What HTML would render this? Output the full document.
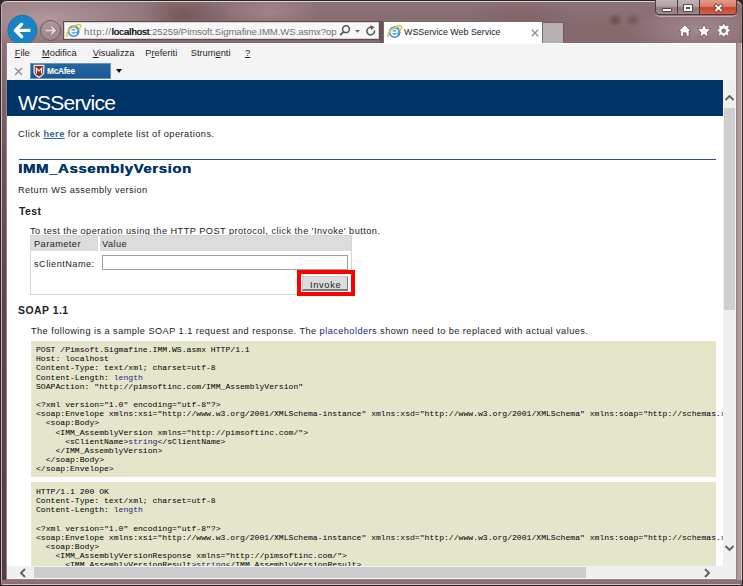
<!DOCTYPE html>
<html><head><meta charset="utf-8">
<style>
*{box-sizing:border-box;margin:0;padding:0}
html,body{width:743px;height:586px;overflow:hidden;background:#2e2226}
body{position:relative;font-family:"Liberation Sans",sans-serif}
.a{position:absolute}
#frame{left:0;top:0;width:743px;height:586px;border-radius:7px 7px 3px 3px;
 background:radial-gradient(ellipse 130px 34px at 45px 20px,rgba(205,182,184,0.6),rgba(205,182,184,0)),radial-gradient(ellipse 50px 20px at 270px 12px,rgba(200,168,170,0.35),rgba(200,168,170,0)),radial-gradient(ellipse 45px 22px at 185px 14px,rgba(80,50,50,0.35),rgba(80,50,50,0)),radial-gradient(ellipse 8px 7px at 615px 20px,rgba(60,40,42,0.45),rgba(60,40,42,0)),radial-gradient(ellipse 8px 7px at 633px 20px,rgba(60,40,42,0.35),rgba(60,40,42,0)),radial-gradient(ellipse 75px 24px at 700px 30px,rgba(205,185,187,0.4),rgba(205,185,187,0)),radial-gradient(ellipse 60px 20px at 520px 14px,rgba(90,60,62,0.2),rgba(90,60,62,0)),linear-gradient(180deg,#8f7477 0%,#84696d 5%,#82686b 100%)}
#menu{left:7px;top:43px;width:729px;height:37px;background:#f4f4f4;border-top:1px solid #fdfdfd}
#view{left:7px;top:80px;width:729px;height:499px;background:#fff;overflow:hidden}
.mi{top:47px;font-size:9.3px;line-height:12px;color:#1e1e1e}
.mi u{text-decoration:underline;text-underline-offset:0.5px}
#hdr{left:0;top:0;width:716px;height:36px;background:#003366}
#hdr span{position:absolute;color:#fff;line-height:24px}
.t{position:absolute;font-size:9.2px;line-height:12px;color:#222;white-space:nowrap}
.b{font-weight:bold}
pre{position:absolute;left:24px;width:685px;background:#e5e5cc;font-family:"Liberation Mono",monospace;font-size:8.1px;line-height:9.17px;color:#000;padding:4px 0 0 5px;white-space:pre;overflow:visible}
.v{color:#24247a}
#vs{left:723px;top:80px;width:13px;height:486px;background:#f0f0f0}
#hs{left:7px;top:566px;width:716px;height:12px;background:#f0f0f0}
</style></head><body>
<div id="frame" class="a"></div>
<div class="a" style="left:1px;top:43px;width:5px;height:542px;background:linear-gradient(90deg,rgba(200,185,186,0.8) 0,rgba(200,185,186,0.8) 1px,transparent 1px),linear-gradient(180deg,#8c7476 0,#6e5557 110px,#5c4448 250px,#553d41 100%)"></div>
<div class="a" style="left:737px;top:43px;width:5px;height:542px;background:linear-gradient(90deg,#a68c8e 0,#b8a0a2 2px,#a88e90 4px,#d8cacb 4px)"></div>
<div class="a" style="left:1px;top:580px;width:741px;height:5px;background:linear-gradient(180deg,#927476 0,#8c6c6e 4px,#d0c2c2 4px)"></div>
<div class="a" style="left:0;top:0;width:743px;height:586px;border-radius:7px 7px 3px 3px;border:1px solid #2a2426;box-shadow:inset 0 1px 0 0 rgba(235,225,225,0.85),inset 1px 0 0 0 rgba(220,205,205,0.5)"></div>
<div class="a" style="left:6px;top:43px;width:731px;height:537px;border:1px solid #8c8486;border-radius:1px"></div>

<!-- window buttons -->
<div class="a" style="left:655px;top:0;width:82px;height:16px;border-radius:0 0 5px 5px;box-shadow:0 1px 0 rgba(235,225,225,0.5)"></div>
<div class="a" style="left:655px;top:0;width:45px;height:15px;border:1px solid #4e3e42;border-top:none;border-radius:0 0 0 4px;background:linear-gradient(#c2b4b6 0%,#b0a1a3 45%,#8e7c7f 55%,#9a888b 100%)"></div>
<div class="a" style="left:677px;top:0;width:1px;height:15px;background:#4e3e42"></div>
<div class="a" style="left:699px;top:0;width:38px;height:15px;border:1px solid #5a3430;border-top:none;border-radius:0 0 4px 0;background:linear-gradient(#e59a8c 0%,#dc7d6c 45%,#c8432f 55%,#d2604e 100%)"></div>
<div class="a" style="left:662px;top:8px;width:10px;height:4px;background:#fff;border:1px solid #4a4a4a;border-radius:1px"></div>
<div class="a" style="left:684px;top:5px;width:8px;height:6px;border:2px solid #fff;box-shadow:0 0 0 1px #505050,inset 0 0 0 1px #505050;background:#a09092"></div>
<svg class="a" style="left:713px;top:3px" width="11" height="10"><path d="M3 2.6 L8 7.4 M8 2.6 L3 7.4" stroke="#6a3a34" stroke-width="3.4" stroke-linecap="square"/><path d="M3 2.6 L8 7.4 M8 2.6 L3 7.4" stroke="#fff" stroke-width="1.9" stroke-linecap="square"/></svg>

<!-- back / forward -->
<svg class="a" style="left:0;top:0" width="45" height="45"><circle cx="22.4" cy="29.9" r="14.8" fill="#1884c6" stroke="rgba(50,40,60,0.35)" stroke-width="0.6"/><path d="M16 30.4 H30.4" stroke="#fff" stroke-width="3.2"/><path d="M21.6 24.2 L15.4 30.4 L21.6 36.6" stroke="#fff" stroke-width="3.4" fill="none" stroke-linecap="round" stroke-linejoin="round"/></svg>
<div class="a" style="left:40px;top:20px;width:21px;height:21px;border-radius:50%;border:1px solid #6e5a5d;background:rgba(175,155,158,0.35)"></div>
<svg class="a" style="left:40px;top:20px" width="21" height="21"><path d="M5.5 10.5 H15 M11.2 6.6 L15 10.5 L11.2 14.4" stroke="rgba(90,66,70,0.45)" stroke-width="3.2" fill="none"/><path d="M5.5 10.5 H15 M11.2 6.6 L15 10.5 L11.2 14.4" stroke="#e6dcdc" stroke-width="1.8" fill="none"/></svg>

<!-- address bar -->
<div class="a" style="left:63px;top:21px;width:317px;height:19px;background:#f7f7f7;border:1px solid #5e4c50;box-shadow:inset 0 0 0 1px #d8d2d3"></div>
<svg class="a" style="left:65px;top:23px" width="17" height="15" viewBox="0 0 17 15"><circle cx="8.6" cy="8.2" r="5.9" fill="#4596d6"/><path d="M5.3 8.4 H11.6 M11.6 8.4 C11.6 6.2 10.4 5.2 8.7 5.2 C6.8 5.2 5.3 6.6 5.3 8.6 C5.3 10.6 6.8 11.6 8.7 11.6 C9.9 11.6 10.8 11.1 11.4 10.3" stroke="#f4f8fc" stroke-width="1.6" fill="none"/><path d="M2.6 13.6 C0.2 11.8 3 6.5 8.5 3.6 C12.5 1.5 15.8 1.2 16 2.6 C16.2 3.8 14.6 5.6 13.4 6.6" stroke="#e8c63c" stroke-width="1.5" fill="none"/></svg>
<div class="a" style="left:84px;top:24.5px;font-size:9.6px;color:#707070;white-space:nowrap;line-height:13px"><span style="letter-spacing:0.5px">http://</span><span style="color:#151515;text-shadow:0.4px 0 0 #151515">localhost</span><span style="letter-spacing:-0.08px">:25259/Pimsoft.Sigmafine.IMM.WS.asmx?op</span></div>
<svg class="a" style="left:338px;top:24px" width="40" height="14"><circle cx="8" cy="5.2" r="3.4" stroke="#555" stroke-width="1.5" fill="none"/><path d="M5.5 7.8 L2.2 11.2" stroke="#555" stroke-width="1.8"/><path d="M17 6 L22 6 L19.5 8.8 Z" fill="#666"/><path d="M36.4 6.3 A3.8 3.8 0 1 1 33.6 3.4" stroke="#555" stroke-width="1.5" fill="none"/><path d="M32.3 1.3 L36.3 3.1 L33.3 6.3 Z" fill="#555"/></svg>

<!-- tab -->
<div class="a" style="left:380px;top:21px;width:3px;height:22px;background:#6a5256"></div>
<div class="a" style="left:383px;top:21px;width:160px;height:23px;background:#fff;border:1px solid #7d6a6d;border-bottom:none;box-shadow:inset 1px 1px 0 #fafafa"></div>
<svg class="a" style="left:386px;top:24px" width="17" height="15" viewBox="0 0 17 15"><circle cx="8.6" cy="8.2" r="5.9" fill="#4596d6"/><path d="M5.3 8.4 H11.6 M11.6 8.4 C11.6 6.2 10.4 5.2 8.7 5.2 C6.8 5.2 5.3 6.6 5.3 8.6 C5.3 10.6 6.8 11.6 8.7 11.6 C9.9 11.6 10.8 11.1 11.4 10.3" stroke="#f4f8fc" stroke-width="1.6" fill="none"/><path d="M2.6 13.6 C0.2 11.8 3 6.5 8.5 3.6 C12.5 1.5 15.8 1.2 16 2.6 C16.2 3.8 14.6 5.6 13.4 6.6" stroke="#e8c63c" stroke-width="1.5" fill="none"/></svg>
<div class="a" style="left:404px;top:26px;font-size:8.9px;color:#1a1a1a;white-space:nowrap;line-height:12px;letter-spacing:0px">WSService Web Service</div>
<svg class="a" style="left:531px;top:29px" width="8" height="8"><path d="M0.8 0.8 L7.2 7.2 M7.2 0.8 L0.8 7.2" stroke="#8e8e8e" stroke-width="1.3"/></svg>
<div class="a" style="left:543px;top:22px;width:21px;height:21px;background:#b9b0b1;border:1px solid #6e5e61;border-bottom:none;border-left:none"></div>

<!-- home star gear -->
<svg class="a" style="left:677px;top:23px" width="56" height="16" viewBox="0 0 56 16">
<g fill="#fff" stroke="rgba(70,50,55,0.6)" stroke-width="0.9" stroke-linejoin="round">
<path d="M7.8 2 L13.8 8 L12 8 L12 13.3 L9.2 13.3 L9.2 9.8 L6.4 9.8 L6.4 13.3 L3.6 13.3 L3.6 8 L1.8 8 Z"/>
<path d="M27.00 1.30 L28.94 5.53 L33.56 6.07 L30.14 9.22 L31.06 13.78 L27.00 11.50 L22.94 13.78 L23.86 9.22 L20.44 6.07 L25.06 5.53 Z"/>
</g>
<g transform="translate(46.7,7.8)">
<path d="M-1.3 -6.3 H1.3 L1.7 -4.3 L3.3 -3.6 L5 -4.8 L6.8 -3 L5.6 -1.3 L6.3 0.3 L8.3 0.7 V3.3 L6.3 3.7 L5.6 5.3 L6.8 7 L5 8.8 L3.3 7.6 L1.7 8.3 L1.3 10.3 H-1.3 L-1.7 8.3 L-3.3 7.6 L-5 8.8 L-6.8 7 L-5.6 5.3 L-6.3 3.7 L-8.3 3.3 V0.7 L-6.3 0.3 L-5.6 -1.3 L-6.8 -3 L-5 -4.8 L-3.3 -3.6 L-1.7 -4.3 Z" transform="translate(0,-2) scale(0.78)" fill="#fff" stroke="rgba(70,50,55,0.6)" stroke-width="1"/>
<circle cx="0" cy="0" r="2.4" fill="#8d7779"/>
</g>
</svg>

<div id="menu" class="a"></div>
<div class="a mi" style="left:14.7px"><u>F</u>ile</div>
<div class="a mi" style="left:42px"><u>M</u>odifica</div>
<div class="a mi" style="left:92.7px"><u>V</u>isualizza</div>
<div class="a mi" style="left:145.2px">P<u>r</u>eferiti</div>
<div class="a mi" style="left:190.7px">Strum<u>e</u>nti</div>
<div class="a mi" style="left:245px"><u>?</u></div>

<svg class="a" style="left:14px;top:67px" width="9" height="9"><path d="M1 1 L8 8 M8 1 L1 8" stroke="#8c8c8c" stroke-width="1.4"/></svg>
<div class="a" style="left:30px;top:63px;width:81px;height:16px;background:linear-gradient(#2466a0,#1a5a94);border:1px solid #6c92b8"></div>
<svg class="a" style="left:33px;top:64px" width="12" height="14" viewBox="0 0 12 14"><path d="M1.2 1.4 H10.8 V8 C10.8 10.8 8.2 12.2 6 13.3 C3.8 12.2 1.2 10.8 1.2 8 Z" fill="#9a2822" stroke="#ece6e6" stroke-width="1.3"/><path d="M3.4 9.6 V4.4 L6 7 L8.6 4.4 V9.6" stroke="#fff" stroke-width="1.2" fill="none"/></svg>
<div class="a" style="left:47px;top:64px;font-size:8.4px;font-weight:bold;color:#fff;line-height:14px;letter-spacing:-0.35px">McAfee</div>
<div class="a" style="left:116px;top:69px;width:0;height:0;border-left:3.5px solid transparent;border-right:3.5px solid transparent;border-top:4px solid #111"></div>

<div id="view" class="a">
 <div id="hdr" class="a"><span style="font-size:21px;letter-spacing:-0.75px;top:11px;left:11px">WSService</span></div>
 <div class="t" style="left:11px;top:48px;font-size:9.3px;letter-spacing:0.44px">Click <span class="b" style="color:#336699;text-decoration:underline">here</span> for a complete list of operations.</div>
 <div class="a" style="left:12px;top:79px;width:697px;height:1px;background:#2e5078"></div>
 <div class="t b" style="left:11px;top:82.5px;font-size:13px;letter-spacing:0.5px;color:#003366;text-shadow:0.35px 0 0 #003366;transform:scaleX(1.155);transform-origin:0 0">IMM_AssemblyVersion</div>
 <div class="t" style="left:11px;top:104px;font-size:9.2px;letter-spacing:0.43px">Return WS assembly version</div>
 <div class="t b" style="left:12px;top:126px;font-size:10.4px;letter-spacing:0.46px">Test</div>
 <div class="t" style="left:23px;top:145px;font-size:9.2px;letter-spacing:0.465px">To test the operation using the HTTP POST protocol, click the 'Invoke' button.</div>
 <div class="a" style="left:23px;top:155px;width:322px;height:60px;border:1px solid #d4d4d4"></div>
 <div class="a" style="left:24px;top:156px;width:67px;height:15px;background:#dcdcdc"></div>
 <div class="a" style="left:93px;top:156px;width:251px;height:15px;background:#dcdcdc"></div>
 <div class="t" style="left:27px;top:158px;font-size:9.2px;letter-spacing:0.45px">Parameter</div>
 <div class="t" style="left:95px;top:158px;font-size:9.2px;letter-spacing:0.45px">Value</div>
 <div class="t" style="left:27px;top:178px;font-size:9.2px;letter-spacing:0.45px">sClientName:</div>
 <div class="a" style="left:95px;top:175px;width:246px;height:15px;border:1px solid #a0a0a0;background:#fff"></div>
 <div class="a" style="left:290px;top:190px;width:58px;height:26px;border:4px solid #ff0000"></div>
 <div class="a" style="left:295px;top:196px;width:46px;height:15px;border:1px solid #c8c8c8;border-right-color:#7a7a7a;border-bottom:2px solid #7a7a7a;background:#dcdcdc"></div>
 <div class="t" style="left:303px;top:199px;font-size:9.2px;letter-spacing:0.7px">Invoke</div>
 <div class="t b" style="left:11px;top:225px;font-size:10.4px;letter-spacing:0.5px">SOAP 1.1</div>
 <div class="t" style="left:24px;top:245px;font-size:9.2px;letter-spacing:0.45px">The following is a sample SOAP 1.1 request and response. The <span class="v">placeholders</span> shown need to be replaced with actual values.</div>
<pre style="top:261px;height:136px">POST /Pimsoft.Sigmafine.IMM.WS.asmx HTTP/1.1
Host: localhost
Content-Type: text/xml; charset=utf-8
Content-Length: <span class="v">length</span>
SOAPAction: "http://pimsoftinc.com/IMM_AssemblyVersion"

&lt;?xml version="1.0" encoding="utf-8"?&gt;
&lt;soap:Envelope xmlns:xsi="http://www.w3.org/2001/XMLSchema-instance" xmlns:xsd="http://www.w3.org/2001/XMLSchema" xmlns:soap="http://schemas.xmlsoap.org/soap/envelope/"&gt;
  &lt;soap:Body&gt;
    &lt;IMM_AssemblyVersion xmlns="http://pimsoftinc.com/"&gt;
      &lt;sClientName&gt;<span class="v">string</span>&lt;/sClientName&gt;
    &lt;/IMM_AssemblyVersion&gt;
  &lt;/soap:Body&gt;
&lt;/soap:Envelope&gt;</pre>
<pre style="top:402px;height:120px;padding-top:5px">HTTP/1.1 200 OK
Content-Type: text/xml; charset=utf-8
Content-Length: <span class="v">length</span>

&lt;?xml version="1.0" encoding="utf-8"?&gt;
&lt;soap:Envelope xmlns:xsi="http://www.w3.org/2001/XMLSchema-instance" xmlns:xsd="http://www.w3.org/2001/XMLSchema" xmlns:soap="http://schemas.xmlsoap.org/soap/envelope/"&gt;
  &lt;soap:Body&gt;
    &lt;IMM_AssemblyVersionResponse xmlns="http://pimsoftinc.com/"&gt;
      &lt;IMM_AssemblyVersionResult&gt;<span class="v">string</span>&lt;/IMM_AssemblyVersionResult&gt;
    &lt;/IMM_AssemblyVersionResponse&gt;
  &lt;/soap:Body&gt;</pre>
</div>

<div id="vs" class="a"></div>
<div class="a" style="left:724px;top:108px;width:11px;height:202px;background:#cfcfcf"></div><div class="a" style="left:735px;top:80px;width:1px;height:499px;background:#f4f4f4"></div>
<div id="hs" class="a"></div>
<div class="a" style="left:7px;top:578px;width:729px;height:1px;background:#fafafa"></div>
<div class="a" style="left:34px;top:567px;width:552px;height:11px;background:#cdcdcd"></div>
<div class="a" style="left:723px;top:566px;width:13px;height:12px;background:#f0f0f0"></div>
<svg class="a" style="left:723px;top:91px" width="13" height="14"><path d="M2.5 9 L6.5 5 L10.5 9" stroke="#606060" stroke-width="1.9" fill="none"/></svg>
<svg class="a" style="left:723px;top:541px" width="13" height="14"><path d="M2.5 5 L6.5 9 L10.5 5" stroke="#606060" stroke-width="1.9" fill="none"/></svg>
<svg class="a" style="left:16px;top:567px" width="14" height="12"><path d="M9 2 L5 6 L9 10" stroke="#606060" stroke-width="1.9" fill="none"/></svg>
<svg class="a" style="left:700px;top:567px" width="14" height="12"><path d="M5 2 L9 6 L5 10" stroke="#606060" stroke-width="1.9" fill="none"/></svg>
</body></html>
